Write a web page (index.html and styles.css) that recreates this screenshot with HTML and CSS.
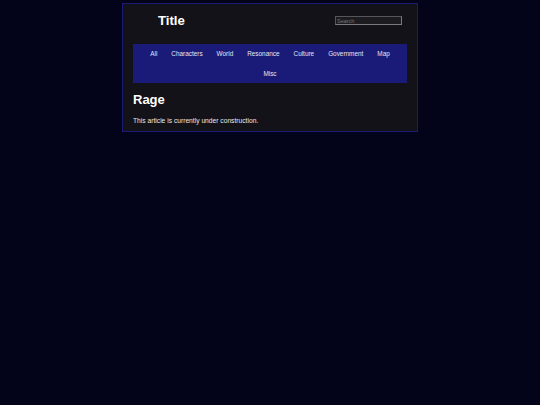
FILE: index.html
```html
<!DOCTYPE html>
<html>
<head>
<meta charset="utf-8">
<link rel="stylesheet" href="styles.css">
</head>
<body>
<div class="page">
  <header class="header">
    <div class="title">Title</div>
    <input class="search" type="text" placeholder="Search">
  </header>
  <nav class="nav">
    <a class="nav-item">All</a>
    <a class="nav-item">Characters</a>
    <a class="nav-item">World</a>
    <a class="nav-item">Resonance</a>
    <a class="nav-item">Culture</a>
    <a class="nav-item">Government</a>
    <a class="nav-item">Map</a>
    <a class="nav-item">Misc</a>
  </nav>
  <h1 class="heading">Rage</h1>
  <p class="text">This article is currently under construction.</p>
</div>
</body>
</html>
```
FILE: styles.css
```css
html, body {
  margin: 0;
  padding: 0;
  background: #03031a;
  font-family: "Liberation Sans", Arial, sans-serif;
  color: #ffffff;
}
.page {
  width: 274px;
  margin: 3px auto 0;
  padding: 0 10px 6px;
  background: #121218;
  border: 1px solid #1a1a78;
}
.header {
  height: 33px;
  margin-bottom: 7px;
  display: flex;
  align-items: center;
  justify-content: space-between;
  padding: 0 5px 0 25px;
}
.title {
  font-size: 13.2px;
  font-weight: bold;
  line-height: 15px;
}
.search {
  box-sizing: border-box;
  width: 67px;
  height: 9px;
  padding: 0 1px;
  margin: 0;
  font-family: "Liberation Sans", Arial, sans-serif;
  font-size: 5.5px;
  background: #1b1b20;
  color: #ccc;
  border: 1px solid #7a7a80;
  border-top-color: #55555a;
  border-left-color: #55555a;
  outline: none;
}
.search::placeholder {
  color: #77777d;
}
.nav {
  display: flex;
  flex-wrap: wrap;
  justify-content: center;
  background: #1a1a78;
  height: 39px;
}
.nav-item {
  font-size: 6.4px;
  line-height: 19.5px;
  padding: 0 7px;
  color: #e6e6f0;
}
.heading {
  margin: 9px 0 0;
  font-size: 13px;
  line-height: 15px;
  font-weight: bold;
}
.text {
  margin: 10px 0 0;
  font-size: 6.7px;
  line-height: 8px;
  color: #e8e8ec;
}
```
